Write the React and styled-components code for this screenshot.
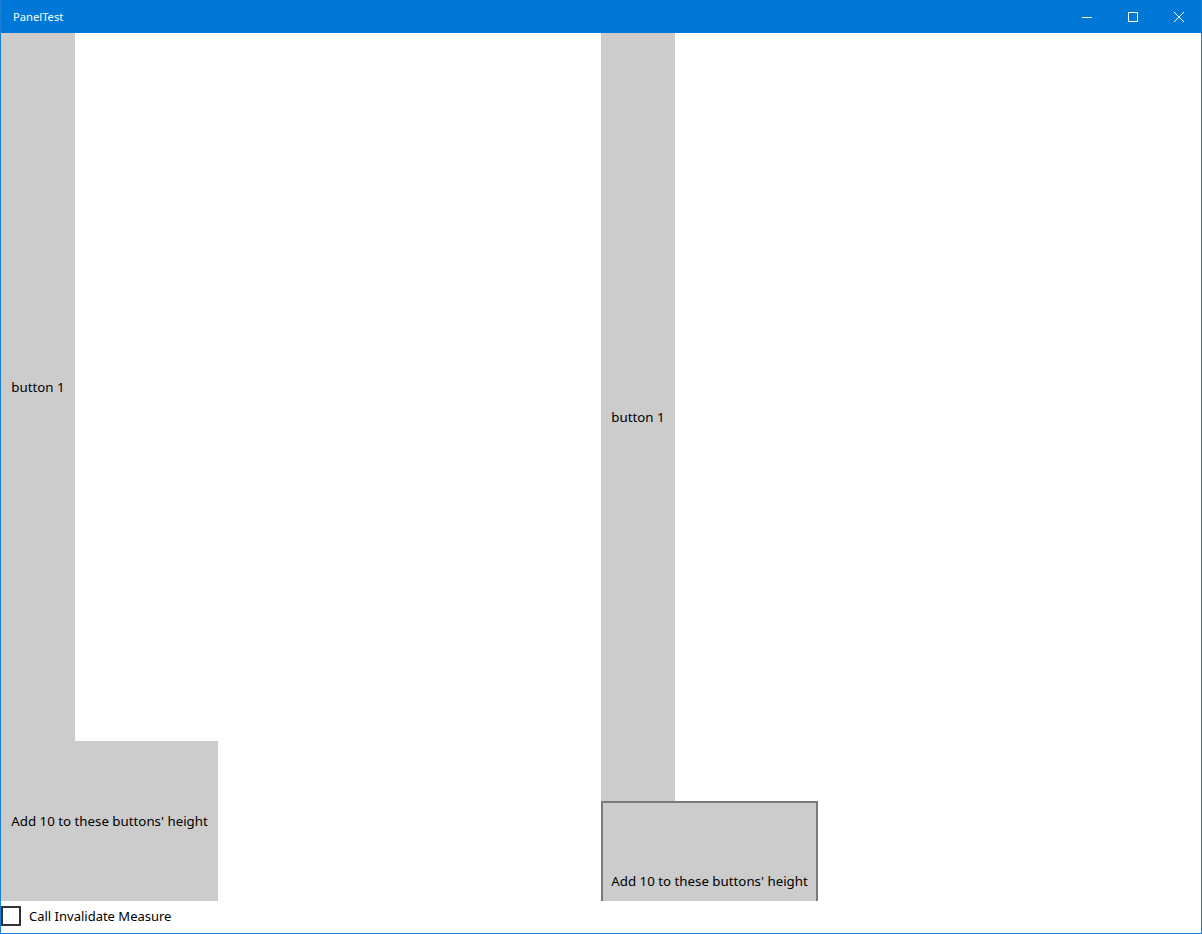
import React from 'react';
import styled, { createGlobalStyle } from 'styled-components';

const GlobalStyle = createGlobalStyle`
    html, body {
        margin: 0;
        padding: 0;
        background: #ffffff;
    }
    body {
        font-family: "Noto Sans", "Open Sans", sans-serif;
    }
`

const Window = styled.div`
    width: 1202px;
    height: 934px;
    box-sizing: border-box;
    display: flex;
    flex-direction: column;
    border: 1px solid #1a7fd4;
    border-top: none;
    overflow: hidden;
`

const TitleBar = styled.div`
    height: 33px;
    margin: 0 -1px;
    background: #0078d7;
    display: flex;
    align-items: center;
    flex-shrink: 0;
`

const Title = styled.div`
    flex: 1;
    padding-left: 13px;
    color: #ffffff;
    font-size: 11.2px;
    line-height: 33px;
`

const Control = styled.div`
    width: 46px;
    height: 33px;
    display: flex;
    align-items: center;
    justify-content: center;
`

const Content = styled.div`
    flex: 1;
    display: grid;
    grid-template-columns: 600px 600px;
    grid-template-rows: 868px 32px;
`

const Panel = styled.div`
    display: flex;
    flex-direction: column;
    align-items: flex-start;
    overflow: hidden;
`

const GrayButton = styled.div`
    flex-shrink: 0;
    width: ${p => p.w}px;
    height: ${p => p.h}px;
    box-sizing: border-box;
    background: #cccccc;
    border: ${p => (p.focused ? '2px solid #7a7a7a' : 'none')};
    display: flex;
    align-items: center;
    justify-content: center;
    font-size: 13.3px;
    color: #000000;
    white-space: nowrap;
`

const CheckRow = styled.div`
    display: flex;
    align-items: center;
    gap: 8px;
    padding-bottom: 2px;
`

const Box = styled.div`
    width: 20px;
    height: 20px;
    box-sizing: border-box;
    border: 2px solid #333333;
`

const CheckLabel = styled.span`
    font-size: 13px;
    color: #000000;
`

const App = () => {
    return (
        <>
            <GlobalStyle />
            <Window>
                <TitleBar>
                    <Title>PanelTest</Title>
                    <Control>
                        <svg width="10" height="10" viewBox="0 0 10 10">
                            <line x1="0" y1="5.5" x2="10" y2="5.5" stroke="#fff" strokeWidth="1" />
                        </svg>
                    </Control>
                    <Control>
                        <svg width="10" height="10" viewBox="0 0 10 10">
                            <rect x="0.5" y="0.5" width="9" height="9" fill="none" stroke="#fff" strokeWidth="1" />
                        </svg>
                    </Control>
                    <Control>
                        <svg width="10" height="10" viewBox="0 0 10 10">
                            <path d="M0 0 L10 10 M10 0 L0 10" stroke="#fff" strokeWidth="1" />
                        </svg>
                    </Control>
                </TitleBar>
                <Content>
                    <Panel>
                        <GrayButton w={74} h={708}>button 1</GrayButton>
                        <GrayButton w={217} h={160}>Add 10 to these buttons' height</GrayButton>
                    </Panel>
                    <Panel>
                        <GrayButton w={74} h={768}>button 1</GrayButton>
                        <GrayButton w={217} h={160} focused>Add 10 to these buttons' height</GrayButton>
                    </Panel>
                    <CheckRow>
                        <Box />
                        <CheckLabel>Call Invalidate Measure</CheckLabel>
                    </CheckRow>
                </Content>
            </Window>
        </>
    )
}

export default App;
